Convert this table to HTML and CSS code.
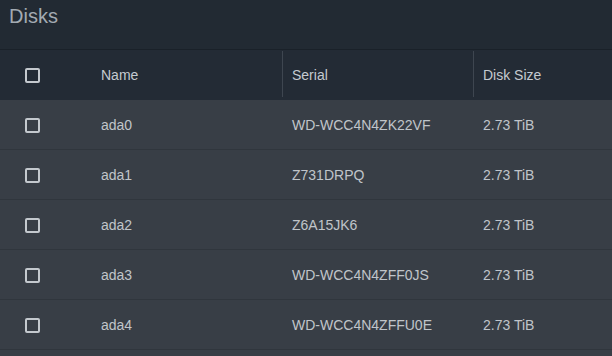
FILE: index.html
```html
<!DOCTYPE html>
<html>
<head>
<meta charset="utf-8">
<link rel="stylesheet" href="styles.css">
</head>
<body>
<div class="card">
  <div class="title">Disks</div>
  <div class="table">
    <div class="row head">
      <div class="cell check"><span class="box"></span></div>
      <div class="cell name">Name</div>
      <div class="cell serial sep">Serial</div>
      <div class="cell size sep">Disk Size</div>
    </div>
    <div class="row">
      <div class="cell check"><span class="box"></span></div>
      <div class="cell name">ada0</div>
      <div class="cell serial">WD-WCC4N4ZK22VF</div>
      <div class="cell size">2.73 TiB</div>
    </div>
    <div class="row">
      <div class="cell check"><span class="box"></span></div>
      <div class="cell name">ada1</div>
      <div class="cell serial">Z731DRPQ</div>
      <div class="cell size">2.73 TiB</div>
    </div>
    <div class="row">
      <div class="cell check"><span class="box"></span></div>
      <div class="cell name">ada2</div>
      <div class="cell serial">Z6A15JK6</div>
      <div class="cell size">2.73 TiB</div>
    </div>
    <div class="row">
      <div class="cell check"><span class="box"></span></div>
      <div class="cell name">ada3</div>
      <div class="cell serial">WD-WCC4N4ZFF0JS</div>
      <div class="cell size">2.73 TiB</div>
    </div>
    <div class="row">
      <div class="cell check"><span class="box"></span></div>
      <div class="cell name">ada4</div>
      <div class="cell serial">WD-WCC4N4ZFFU0E</div>
      <div class="cell size">2.73 TiB</div>
    </div>
    <div class="row last"></div>
  </div>
</div>
</body>
</html>
```
FILE: styles.css
```css
html, body {
  margin: 0;
  padding: 0;
  background: #383e46;
  overflow: hidden;
}
.card {
  width: 612px;
  font-family: "Liberation Sans", Arial, sans-serif;
}
.title {
  height: 50px;
  box-sizing: border-box;
  padding: 4px 0 0 9px;
  font-size: 20px;
  line-height: 24px;
  color: #a3aab2;
  background: #222a33;
  border-bottom: 1px solid #1a2129;
}
.row {
  display: grid;
  grid-template-columns: 92px 190px 191px 139px;
  height: 50px;
  box-sizing: border-box;
  border-bottom: 1px solid #30363d;
  background: #383e46;
  color: #c0c5ca;
  font-size: 14px;
}
.row.head {
  background: #232b35;
  border-bottom: 1px solid #232b35;
  color: #c5cad0;
}
.row.last {
  border-bottom: none;
}
.cell {
  display: flex;
  align-items: center;
  padding-left: 9px;
  padding-top: 1px;
}
.cell.check {
  padding-left: 25px;
}
.cell.sep {
  border-left: 1px solid #3e4650;
  padding-left: 9px;
  margin: 1px 0 2px;
}
.cell.serial:not(.sep) {
  padding-left: 10px;
}
.cell.size:not(.sep) {
  padding-left: 10px;
}
.box {
  width: 11px;
  height: 11px;
  border: 2px solid #c4c9ce;
  border-radius: 2px;
}
```
